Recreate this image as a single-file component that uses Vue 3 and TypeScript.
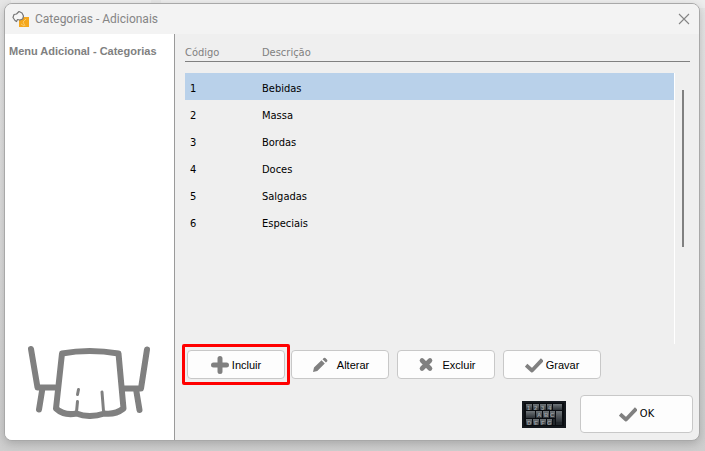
<script setup lang="ts">
import { ref } from 'vue'

interface Category {
  code: number
  description: string
}

const categories: Category[] = [
  { code: 1, description: 'Bebidas' },
  { code: 2, description: 'Massa' },
  { code: 3, description: 'Bordas' },
  { code: 4, description: 'Doces' },
  { code: 5, description: 'Salgadas' },
  { code: 6, description: 'Especiais' },
]

const selected = ref<number>(1)
</script>

<template>
  <div class="desktop">
    <div class="behind"><span></span><span></span></div>
    <main class="window">
      <header class="titlebar">
        <svg class="app-icon" viewBox="0 0 18 18" aria-hidden="true">
          <rect x="7" y="7" width="10" height="10" fill="#f5a71c" />
          <path d="M14 9l-3 3 2 4M9 14l3 2" fill="none" stroke="#f9cb6c" stroke-width="1" />
          <path d="M3 10.500L1 7.500 2 4.500l2.500-.5L7 1.500l3 1.500 1.500 3-.8 3L8 10l-2.500-.5L4.500 11.500z" fill="#f6f6f6" stroke="#777" stroke-width="1.200" stroke-linejoin="round" />
        </svg>
        <h1>Categorias - Adicionais</h1>
        <button class="close" type="button" aria-label="Fechar">
          <svg viewBox="0 0 12 12"><path d="M1 1l10 10M11 1L1 11" fill="none" stroke="#858585" stroke-width="1.100" /></svg>
        </button>
      </header>

      <div class="body">
        <aside class="sidebar">
          <h2>Menu Adicional - Categorias</h2>
          <svg class="table-art" viewBox="0 0 124 74" aria-hidden="true">
            <g fill="none" stroke="#808080" stroke-linecap="round" stroke-linejoin="round">
              <path d="M4 4L10.500 42.500H28M15.500 43L12 64.500M120 4.500L114 43.500H97M109 44L112.500 65" stroke-width="6" />
              <path d="M35 8.500Q62 3.500 91.500 8.500L96.500 63.500Q88 70 77.500 68.500Q62 73.500 49.500 68.500Q37 71 29 63.500Z" stroke-width="6" />
              <path d="M51.500 44.500L50.500 49.500M50.500 56.500L49.500 67M75 47L76.500 66" stroke-width="3" />
            </g>
          </svg>
        </aside>

        <section class="content">
          <div class="list">
            <table>
              <colgroup><col class="col-code" /><col /><col class="col-scroll" /></colgroup>
              <thead>
                <tr><th scope="col">Código</th><th scope="col" colspan="2">Descrição</th></tr>
              </thead>
              <tbody>
                <tr v-for="item in categories" :key="item.code" :class="{ selected: item.code === selected }" @click="selected = item.code">
                  <td class="code">{{ item.code }}</td>
                  <td>{{ item.description }}</td>
                  <td class="gutter"></td>
                </tr>
              </tbody>
            </table>
            <div class="scrollbar"><span class="thumb"></span></div>
          </div>

          <div class="actions">
            <span class="highlight">
              <button type="button" class="btn">
                <svg class="icon" viewBox="0 0 18 18"><path d="M9 2.500v13M2.500 9h13" fill="none" stroke="#808080" stroke-width="5" stroke-linecap="round" /></svg>
                Incluir
              </button>
            </span>
            <button type="button" class="btn wide">
              <svg class="icon" viewBox="0 0 18 18"><path d="M2 16l1-4.500 7.500-7.200 3.300 3.300L6.300 15zM11.500 3.300l1.300-1.200q.8-.7 1.600 0l1.700 1.700q.7.800 0 1.600l-1.200 1.200z" fill="#808080" /></svg>
              Alterar
            </button>
            <button type="button" class="btn wide">
              <svg class="icon" viewBox="0 0 18 18"><path d="M6 4.500l8 8M14 4.500l-8 8" fill="none" stroke="#808080" stroke-width="4.600" stroke-linecap="round" /></svg>
              Excluir
            </button>
            <button type="button" class="btn">
              <svg class="icon" viewBox="0 0 18 18"><path d="M2.500 10.500l4.500 4L16 5" fill="none" stroke="#808080" stroke-width="3.800" stroke-linejoin="round" stroke-linecap="square" /></svg>
              Gravar
            </button>
          </div>

          <footer class="footer">
            <button type="button" class="keyboard" aria-label="Teclado">
              <svg viewBox="0 0 44 27">
                <defs>
                  <linearGradient id="key" x1="0" y1="0" x2="0" y2="1">
                    <stop offset="0" stop-color="#70767a" /><stop offset="1" stop-color="#2c3136" />
                  </linearGradient>
                </defs>
                <rect width="44" height="27" fill="#14181d" />
                <rect x="2" y="2" width="40" height="23" fill="#090c10" />
                <g fill="url(#key)">
                  <rect x="4" y="3" width="6" height="6" /><rect x="11" y="3" width="6" height="6" />
                  <rect x="18" y="3" width="6" height="6" /><rect x="25" y="3" width="5" height="6" />
                  <rect x="31" y="3" width="9" height="6" /><rect x="4" y="10" width="9" height="7" />
                  <rect x="14" y="10" width="6" height="7" /><rect x="21" y="10" width="6" height="7" />
                  <rect x="28" y="10" width="5" height="7" /><rect x="34" y="10" width="6" height="11" />
                  <rect x="4" y="18" width="6" height="6" /><rect x="11" y="18" width="6" height="6" />
                  <rect x="18" y="18" width="6" height="6" /><rect x="25" y="18" width="5" height="6" />
                </g>
                <rect x="31" y="18" width="2" height="6" fill="#22272c" />
                <rect x="34" y="21" width="6" height="3" fill="#22272c" />
                <g class="keycaps">
                  <text x="5" y="9">1</text><text x="12" y="9">2</text><text x="19" y="9">3</text><text x="26" y="9">4</text>
                  <text x="15" y="16">A</text><text x="22" y="16">B</text><text x="28" y="16">C</text>
                  <text x="5" y="24">D</text><text x="12" y="24">E</text><text x="19" y="24">F</text><text x="25" y="24">G</text>
                </g>
              </svg>
            </button>
            <button type="button" class="btn ok">
              <svg class="icon" viewBox="0 0 18 18"><path d="M2.500 10.500l4.500 4L16 5" fill="none" stroke="#808080" stroke-width="3.800" stroke-linejoin="round" stroke-linecap="square" /></svg>
              OK
            </button>
          </footer>
        </section>
      </div>
    </main>
  </div>
</template>

<style>
body {
  background: #d3d3d3;
}
</style>

<style scoped>
* {
  box-sizing: border-box;
}

.desktop {
  position: relative;
  display: flex;
  min-height: 100vh;
  padding: 3px 5px 10px 4px;
  background: linear-gradient(#e6e6e6, #dadada 60%, #cecece);
  font-family: "DejaVu Sans Condensed", Tahoma, sans-serif;
  font-size: 11px;
  color: #000;
}

.behind {
  position: absolute;
  inset: 0 0 auto;
  display: flex;
  gap: 10px;
  height: 8px;
  padding-left: 11px;
}

.behind span {
  width: 140px;
  background: #ededed;
}

.behind span + span {
  flex: 1;
}

.window {
  position: relative;
  flex: 1;
  display: flex;
  flex-direction: column;
  overflow: hidden;
  border: 1px solid #a8a8a8;
  border-radius: 8px;
  background: #efefef;
  box-shadow: 0 3px 10px #00000030;
}

.titlebar {
  display: flex;
  align-items: center;
  height: 30px;
  padding: 0 8px 0 7px;
  background: #f3f3f3;
}

.app-icon {
  width: 18px;
  height: 18px;
}

h1 {
  flex: 1;
  margin: 0 0 0 5px;
  font: 400 12px/18px Roboto, "Segoe UI", sans-serif;
  color: #858585;
}

.close {
  width: 14px;
  height: 14px;
  padding: 1px;
  border: 0;
  background: none;
}

.close svg,
.keyboard svg {
  display: block;
  width: 100%;
  height: 100%;
}

.body {
  flex: 1;
  display: grid;
  grid-template-columns: 170px 1fr;
}

.sidebar {
  display: flex;
  flex-direction: column;
  justify-content: space-between;
  padding: 10px 4px 21px;
  border-right: 1px solid #9a9a9a;
  background: #fff;
}

h2 {
  margin: 0;
  font: 700 11px/14px "Liberation Sans", Arial, sans-serif;
  color: #808080;
  white-space: nowrap;
}

.table-art {
  width: 124px;
  height: 74px;
  margin-left: 18px;
}

.content {
  display: flex;
  flex-direction: column;
  padding: 10px 6px 7px 7px;
}

.list {
  position: relative;
  flex: 1;
  margin: 0 3px;
}

table {
  width: 100%;
  border-collapse: separate;
  border-spacing: 0;
  table-layout: fixed;
}

.col-code {
  width: 77px;
}

.col-scroll {
  width: 16px;
}

th {
  height: 18px;
  padding: 1px 0;
  border-bottom: 1px solid #808080;
  font-weight: 400;
  line-height: 14px;
  text-align: left;
  color: #808080;
}

tbody::before {
  content: "";
  display: block;
  height: 11px;
}

td {
  height: 27px;
  padding: 5px 0 0;
  line-height: 14px;
}

td.code {
  padding-left: 5px;
}

.selected td:not(.gutter) {
  background: #b9d1ea;
}

.scrollbar {
  position: absolute;
  inset: 29px 0 0 auto;
  width: 16px;
  padding: 17px 5px 0 7px;
  border-left: 1px solid #fff;
}

.thumb {
  display: block;
  width: 2px;
  height: 62%;
  background: #808080;
}

.actions {
  display: flex;
  align-items: center;
  gap: 8px;
}

.highlight {
  display: flex;
  margin-right: -7px;
  padding: 3px 2px;
  border: 3px solid #f00;
  border-radius: 2px;
}

.btn {
  display: flex;
  align-items: center;
  justify-content: center;
  gap: 3px;
  width: 98px;
  height: 29px;
  padding: 0;
  border: 1px solid #c8c8c8;
  border-radius: 4px;
  background: #fdfdfd;
  font: 400 11px/14px "Liberation Sans", Arial, sans-serif;
  color: #000;
}

.wide {
  gap: 8px;
}

.icon {
  flex: none;
  width: 18px;
  height: 18px;
}

.footer {
  display: flex;
  align-items: center;
  justify-content: flex-end;
  gap: 14px;
  margin-top: 10px;
}

.keyboard {
  width: 44px;
  height: 27px;
  padding: 0;
  border: 0;
  background: none;
}

.keycaps {
  font: 700 6px "Liberation Sans", sans-serif;
  fill: #9a9fa2;
}

.ok {
  width: 113px;
  height: 38px;
  font-family: "DejaVu Sans Condensed", Tahoma, sans-serif;
}
</style>
